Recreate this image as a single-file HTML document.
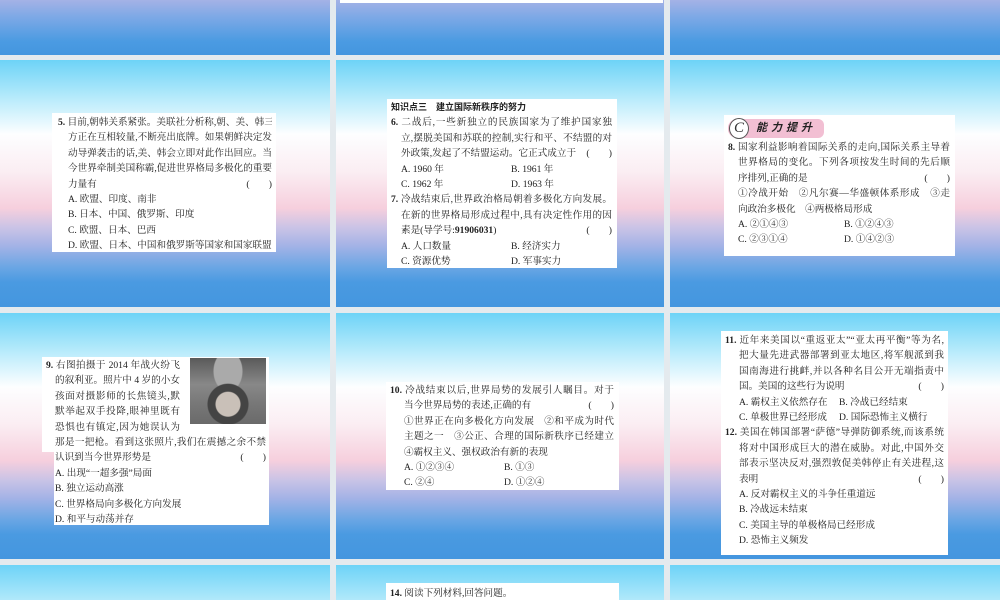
<!DOCTYPE html>
<html style="width:1000px;height:600px;overflow:hidden"><head><meta charset="utf-8"><style>
*{margin:0;padding:0;box-sizing:border-box}
body{width:1000px;height:600px;background:#e4eaee;position:relative;overflow:hidden;font-family:"Liberation Serif","Noto Serif CJK SC","Noto Sans CJK SC",serif;color:#222}
.s{position:absolute;background:linear-gradient(to bottom,#6dd3f7 0%,#b5eafb 15%,#fdfeff 30%,#fbeef3 45%,#f6cfdd 60%,#c9c3e6 68%,#a5b3e6 75%,#6aa6e4 84%,#4a9ae1 90%,#4496df 100%)}
.s4{background-size:100% 247px;background-repeat:no-repeat}
.t{position:absolute;background:linear-gradient(to bottom,#a4b2e6 0%,#7ea9e6 30%,#4b9be2 75%,#4496df 100%)}
.b{position:absolute;background:#fff;font-size:9.6px;line-height:15.4px}
.l{white-space:nowrap;height:15.4px;overflow:hidden}
.j{text-align:justify;text-align-last:justify}
.r{position:relative}
.r span{position:absolute;right:0}
.bold{font-weight:bold;font-family:"Liberation Sans","Noto Sans CJK SC",sans-serif}
</style></head><body>
<!-- row 1 -->
<div class="t" style="left:0;top:0;width:330px;height:55px"></div>
<div class="t" style="left:336px;top:0;width:328px;height:55px"></div>
<div class="t" style="left:670px;top:0;width:330px;height:55px"></div>
<div class="b" style="left:340px;top:0;width:323px;height:3px"></div>
<!-- row 2 -->
<div class="s" style="left:0;top:60px;width:330px;height:247px"></div>
<div class="s" style="left:336px;top:60px;width:328px;height:247px"></div>
<div class="s" style="left:670px;top:60px;width:330px;height:247px"></div>
<!-- row 3 -->
<div class="s" style="left:0;top:313px;width:330px;height:246px"></div>
<div class="s" style="left:336px;top:313px;width:328px;height:246px"></div>
<div class="s" style="left:670px;top:313px;width:330px;height:246px"></div>
<!-- row 4 -->
<div class="s s4" style="left:0;top:565px;width:330px;height:35px"></div>
<div class="s s4" style="left:336px;top:565px;width:328px;height:35px"></div>
<div class="s s4" style="left:670px;top:565px;width:330px;height:35px"></div>
<div class="b" style="left:386px;top:583px;width:233px;height:17px;padding:3px 4px 0 4px;overflow:hidden">
<div class="l" style="height:14px"><b>14.</b> 阅读下列材料,回答问题。</div>
</div>

<!-- box 5 -->
<div class="b" style="left:52px;top:113px;width:224px;height:139px;padding:2px 4px 0 6px">
<div class="l j" style="width:214px"><b>5.</b> 目前,朝韩关系紧张。美联社分析称,朝、美、韩三</div>
<div style="padding-left:10px">
<div class="l j" style="width:204px">方正在互相较量,不断亮出底牌。如果朝鲜决定发</div>
<div class="l j" style="width:204px">动导弹袭击的话,美、韩会立即对此作出回应。当</div>
<div class="l j" style="width:204px">今世界牵制美国称霸,促进世界格局多极化的重要</div>
<div class="l r" style="width:204px">力量有<span>(　　)</span></div>
<div class="l">A. 欧盟、印度、南非</div>
<div class="l">B. 日本、中国、俄罗斯、印度</div>
<div class="l">C. 欧盟、日本、巴西</div>
<div class="l">D. 欧盟、日本、中国和俄罗斯等国家和国家联盟</div>
</div></div>

<!-- box 6/7 -->
<div class="b" style="left:387px;top:99px;width:230px;height:169px;padding:1px 4px 0 4px">
<div class="l bold" style="font-size:9px">知识点三　建立国际新秩序的努力</div>
<div class="l j" style="width:221px"><b>6.</b> 二战后,一些新独立的民族国家为了维护国家独</div>
<div style="padding-left:10px">
<div class="l j" style="width:211px">立,摆脱美国和苏联的控制,实行和平、不结盟的对</div>
<div class="l r" style="width:211px">外政策,发起了不结盟运动。它正式成立于<span>(　　)</span></div>
<div class="l"><span style="display:inline-block;width:110px">A. 1960 年</span>B. 1961 年</div>
<div class="l"><span style="display:inline-block;width:110px">C. 1962 年</span>D. 1963 年</div>
</div>
<div class="l j" style="width:221px"><b>7.</b> 冷战结束后,世界政治格局朝着多极化方向发展。</div>
<div style="padding-left:10px">
<div class="l j" style="width:211px">在新的世界格局形成过程中,具有决定性作用的因</div>
<div class="l r" style="width:211px">素是(导学号:<b>91906031</b>)<span>(　　)</span></div>
<div class="l"><span style="display:inline-block;width:110px">A. 人口数量</span>B. 经济实力</div>
<div class="l"><span style="display:inline-block;width:110px">C. 资源优势</span>D. 军事实力</div>
</div></div>

<!-- box 8 -->
<div class="b" style="left:724px;top:115px;width:231px;height:141px;padding:3px 4px 0 4px">
<div style="height:22px;position:relative">
<div style="position:absolute;left:0;top:1px;width:96px;height:19px;background:#f2bfd3;border-radius:9px 6px 6px 9px"></div>
<div style="position:absolute;left:1px;top:0;width:20px;height:21px;border:1.5px solid #555;border-radius:50%;background:#fff;font-style:italic;font-size:15px;line-height:18px;text-align:center;color:#333">C</div>
<div class="bold" style="position:absolute;left:28px;top:3px;font-size:11px;letter-spacing:4px;color:#222;font-style:italic">能力提升</div>
</div>
<div class="l j" style="width:222px"><b>8.</b> 国家利益影响着国际关系的走向,国际关系主导着</div>
<div style="padding-left:10px">
<div class="l j" style="width:212px">世界格局的变化。下列各项按发生时间的先后顺</div>
<div class="l r" style="width:212px">序排列,正确的是<span>(　　)</span></div>
<div class="l j" style="width:212px">①冷战开始　②凡尔赛—华盛顿体系形成　③走</div>
<div class="l">向政治多极化　④两极格局形成</div>
<div class="l"><span style="display:inline-block;width:106px">A. ②①④③</span>B. ①②④③</div>
<div class="l"><span style="display:inline-block;width:106px">C. ②③①④</span>D. ①④②③</div>
</div></div>

<!-- box 9 -->
<div class="b" style="left:42px;top:357px;width:227px;height:95px"></div>
<div class="b" style="left:54px;top:430px;width:215px;height:95px"></div>
<div style="position:absolute;left:190px;top:358px;width:76px;height:66px;background:radial-gradient(circle at 50% 70%,#c9c0b8 0 12px,#444 13px 20px,transparent 21px),radial-gradient(ellipse at 50% 20%,#aaa 0 14px,transparent 15px),linear-gradient(#5a5a5a,#888 40%,#777 70%,#6a6a6a)"></div>
<div style="position:absolute;left:46px;top:358px;font-size:9.6px;line-height:15.4px">
<div class="l j" style="width:134px"><b>9.</b> 右图拍摄于 2014 年战火纷飞</div>
<div style="padding-left:9px">
<div class="l j" style="width:125px">的叙利亚。照片中 4 岁的小女</div>
<div class="l j" style="width:125px">孩面对摄影师的长焦镜头,默</div>
<div class="l j" style="width:125px">默举起双手投降,眼神里既有</div>
<div class="l j" style="width:125px">恐惧也有镇定,因为她误认为</div>
<div class="l j" style="width:211px">那是一把枪。看到这张照片,我们在震撼之余不禁</div>
<div class="l r" style="width:211px">认识到当今世界形势是<span>(　　)</span></div>
<div class="l">A. 出现“一超多强”局面</div>
<div class="l">B. 独立运动高涨</div>
<div class="l">C. 世界格局向多极化方向发展</div>
<div class="l">D. 和平与动荡并存</div>
</div></div>

<!-- box 10 -->
<div class="b" style="left:386px;top:382px;width:233px;height:108px;padding:1px 4px 0 4px">
<div class="l j" style="width:224px"><b>10.</b> 冷战结束以后,世界局势的发展引人瞩目。对于</div>
<div style="padding-left:14px">
<div class="l r" style="width:210px">当今世界局势的表述,正确的有<span>(　　)</span></div>
<div class="l j" style="width:210px">①世界正在向多极化方向发展　②和平成为时代</div>
<div class="l j" style="width:210px">主题之一　③公正、合理的国际新秩序已经建立</div>
<div class="l">④霸权主义、强权政治有新的表现</div>
<div class="l"><span style="display:inline-block;width:100px">A. ①②③④</span>B. ①③</div>
<div class="l"><span style="display:inline-block;width:100px">C. ②④</span>D. ①②④</div>
</div></div>

<!-- box 11/12 -->
<div class="b" style="left:721px;top:331px;width:227px;height:224px;padding:2px 4px 0 4px">
<div class="l j" style="width:219px"><b>11.</b> 近年来美国以“重返亚太”“亚太再平衡”等为名,</div>
<div style="padding-left:14px">
<div class="l j" style="width:205px">把大量先进武器部署到亚太地区,将军舰派到我</div>
<div class="l j" style="width:205px">国南海进行挑衅,并以各种名目公开无端指责中</div>
<div class="l r" style="width:205px">国。美国的这些行为说明<span>(　　)</span></div>
<div class="l"><span style="display:inline-block;width:100px">A. 霸权主义依然存在</span>B. 冷战已经结束</div>
<div class="l"><span style="display:inline-block;width:100px">C. 单极世界已经形成</span>D. 国际恐怖主义横行</div>
</div>
<div class="l j" style="width:219px"><b>12.</b> 美国在韩国部署“萨德”导弹防御系统,而该系统</div>
<div style="padding-left:14px">
<div class="l j" style="width:205px">将对中国形成巨大的潜在威胁。对此,中国外交</div>
<div class="l j" style="width:205px">部表示坚决反对,强烈敦促美韩停止有关进程,这</div>
<div class="l r" style="width:205px">表明<span>(　　)</span></div>
<div class="l">A. 反对霸权主义的斗争任重道远</div>
<div class="l">B. 冷战远未结束</div>
<div class="l">C. 美国主导的单极格局已经形成</div>
<div class="l">D. 恐怖主义频发</div>
</div></div>
</body></html>
